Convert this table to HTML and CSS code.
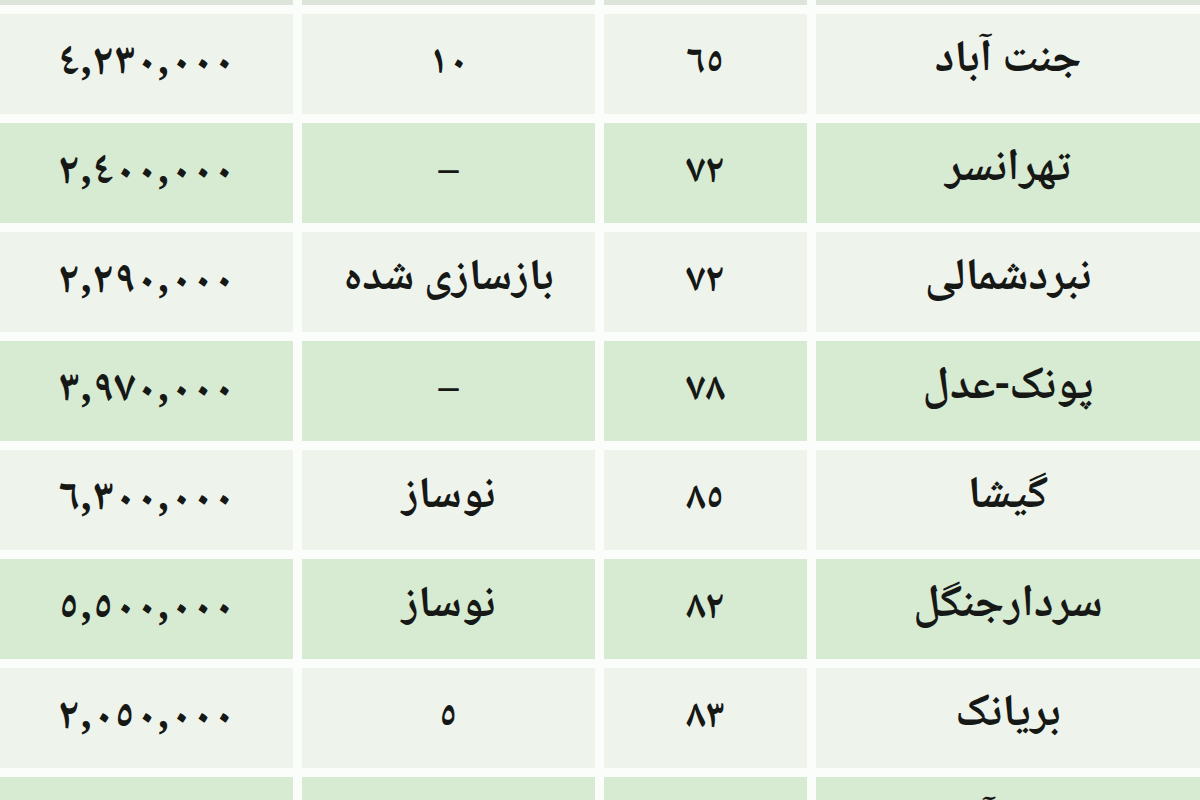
FILE: index.html
```html
<!DOCTYPE html>
<html lang="fa" dir="rtl">
<head>
<meta charset="utf-8">
<title>قیمت مسکن</title>
<link rel="stylesheet" href="styles.css">
</head>
<body>
<div class="table">
  <div class="row top"><div class="cell"></div><div class="cell"></div><div class="cell"></div><div class="cell"></div></div>

  <div class="row light"><div class="cell name">جنت آباد</div><div class="cell num">٦٥</div><div class="cell num">١٠</div><div class="cell price">٤,٢٣٠,٠٠٠</div></div>
  <div class="row green"><div class="cell name">تهرانسر</div><div class="cell num">٧٢</div><div class="cell dash">–</div><div class="cell price">٢,٤٠٠,٠٠٠</div></div>
  <div class="row light"><div class="cell name">نبردشمالی</div><div class="cell num">٧٢</div><div class="cell text">بازسازی شده</div><div class="cell price">٢,٢٩٠,٠٠٠</div></div>
  <div class="row green"><div class="cell name">پونک-عدل</div><div class="cell num">٧٨</div><div class="cell dash">–</div><div class="cell price">٣,٩٧٠,٠٠٠</div></div>
  <div class="row light"><div class="cell name">گیشا</div><div class="cell num">٨٥</div><div class="cell text">نوساز</div><div class="cell price">٦,٣٠٠,٠٠٠</div></div>
  <div class="row green"><div class="cell name">سردارجنگل</div><div class="cell num">٨٢</div><div class="cell text">نوساز</div><div class="cell price">٥,٥٠٠,٠٠٠</div></div>
  <div class="row light"><div class="cell name">بریانک</div><div class="cell num">٨٣</div><div class="cell num">٥</div><div class="cell price">٢,٠٥٠,٠٠٠</div></div>
  <div class="row green"><div class="cell name">شهرآرا</div><div class="cell num">٧٤</div><div class="cell num">١٢</div><div class="cell price">٤,١٥٠,٠٠٠</div></div>
</div>
</body>
</html>
```

FILE: styles.css
```css
html, body {
  margin: 0;
  padding: 0;
  background: #fbfdfa;
  width: 1200px;
  height: 800px;
  overflow: hidden;
}

.table {
  display: flex;
  flex-direction: column;
  gap: 9px;
  font-family: "Noto Naskh Arabic", "DejaVu Sans", sans-serif;
  color: #161816;
}

.row {
  display: grid;
  grid-template-columns: 384px 203px 293px 293px;
  column-gap: 9px;
  height: 100px;
}

.row.top {
  height: 5px;
}

.row.top .cell {
  background: #dde5da;
}

.row.light .cell {
  background: #eef3ec;
}

.row.green .cell {
  background: #d7ead2;
}

.cell {
  display: flex;
  align-items: center;
  justify-content: center;
  font-weight: bold;
  overflow: hidden;
}

.name {
  font-size: 45px;
  padding-bottom: 6px;
  box-sizing: border-box;
}

.text {
  font-size: 44px;
  padding-bottom: 6px;
  box-sizing: border-box;
}

.num {
  font-size: 40px;
  letter-spacing: 3px;
}

.dash {
  font-size: 40px;
}

.price {
  font-size: 44px;
  letter-spacing: 8px;
  direction: ltr;
}
```
